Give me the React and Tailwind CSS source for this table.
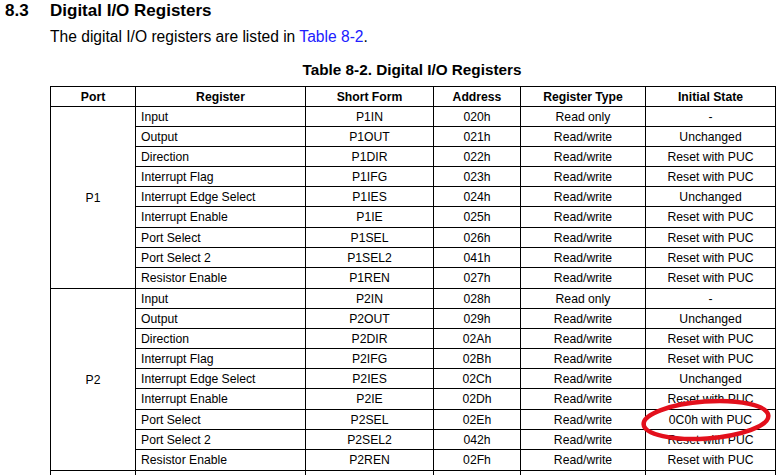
import React from "react";

const ports = [
  {
    port: "P1",
    rows: [
      ["Input", "P1IN", "020h", "Read only", "-"],
      ["Output", "P1OUT", "021h", "Read/write", "Unchanged"],
      ["Direction", "P1DIR", "022h", "Read/write", "Reset with PUC"],
      ["Interrupt Flag", "P1IFG", "023h", "Read/write", "Reset with PUC"],
      ["Interrupt Edge Select", "P1IES", "024h", "Read/write", "Unchanged"],
      ["Interrupt Enable", "P1IE", "025h", "Read/write", "Reset with PUC"],
      ["Port Select", "P1SEL", "026h", "Read/write", "Reset with PUC"],
      ["Port Select 2", "P1SEL2", "041h", "Read/write", "Reset with PUC"],
      ["Resistor Enable", "P1REN", "027h", "Read/write", "Reset with PUC"],
    ],
  },
  {
    port: "P2",
    rows: [
      ["Input", "P2IN", "028h", "Read only", "-"],
      ["Output", "P2OUT", "029h", "Read/write", "Unchanged"],
      ["Direction", "P2DIR", "02Ah", "Read/write", "Reset with PUC"],
      ["Interrupt Flag", "P2IFG", "02Bh", "Read/write", "Reset with PUC"],
      ["Interrupt Edge Select", "P2IES", "02Ch", "Read/write", "Unchanged"],
      ["Interrupt Enable", "P2IE", "02Dh", "Read/write", "Reset with PUC"],
      ["Port Select", "P2SEL", "02Eh", "Read/write", "0C0h with PUC"],
      ["Port Select 2", "P2SEL2", "042h", "Read/write", "Reset with PUC"],
      ["Resistor Enable", "P2REN", "02Fh", "Read/write", "Reset with PUC"],
    ],
  },
];

const cell = "border border-black p-0 text-center";

export default function App() {
  return (
    <div
      className="relative h-[475px] w-[784px] overflow-hidden bg-white text-black"
      style={{ fontFamily: '"Liberation Sans", Arial, sans-serif' }}
    >
      <h2 className="flex pt-[1px] text-[17px] font-bold leading-[20px]">
        <span className="w-[50px] pl-[5px]">8.3</span>
        <span>Digital I/O Registers</span>
      </h2>
      <p className="mt-[7px] pl-[50px] text-[15.6px] leading-[18px]">
        The digital I/O registers are listed in{" "}
        <span className="text-[#2020ff]">Table 8-2</span>.
      </p>
      <div className="mt-[15px] w-[774px] pl-[50px] text-center text-[15.3px] font-bold leading-[18px]">
        Table 8-2. Digital I/O Registers
      </div>
      <table className="ml-[50px] mt-[7px] w-[725px] table-fixed border-collapse text-[12.2px] leading-[14px]">
        <colgroup>
          <col className="w-[85px]" />
          <col className="w-[170px]" />
          <col className="w-[128px]" />
          <col className="w-[87px]" />
          <col className="w-[125px]" />
          <col className="w-[130px]" />
        </colgroup>
        <thead>
          <tr className="h-[20px] font-bold">
            <th className={cell}>Port</th>
            <th className={cell}>Register</th>
            <th className={cell}>Short Form</th>
            <th className={cell}>Address</th>
            <th className={cell}>Register Type</th>
            <th className={cell}>Initial State</th>
          </tr>
        </thead>
        <tbody>
          {ports.map((group, gIdx) =>
            group.rows.map((row, rIdx) => (
              <tr
                key={`${gIdx}-${rIdx}`}
                className={rIdx === 5 || rIdx === 8 ? "h-[21px]" : "h-[20px]"}
              >
                {rIdx === 0 && (
                  <td className={cell} rowSpan={group.rows.length}>
                    {group.port}
                  </td>
                )}
                <td className="border border-black py-0 pl-[5px] text-left">
                  {row[0]}
                </td>
                <td className={cell}>{row[1]}</td>
                <td className={cell}>{row[2]}</td>
                <td className={cell}>{row[3]}</td>
                <td className={cell}>{row[4]}</td>
              </tr>
            ))
          )}
          {/* next port group starts just below the visible area */}
          <tr className="h-[20px]">
            <td className={cell}></td>
            <td className={cell}></td>
            <td className={cell}></td>
            <td className={cell}></td>
            <td className={cell}></td>
            <td className={cell}></td>
          </tr>
        </tbody>
      </table>

      {/* red marker ellipse drawn over the table */}
      <svg
        className="pointer-events-none absolute left-0 top-0"
        width="784"
        height="475"
      >
        <ellipse
          cx="706"
          cy="420"
          rx="62.5"
          ry="18.5"
          fill="none"
          stroke="#e3101c"
          strokeWidth="4.5"
          transform="rotate(-4 706 420)"
        />
      </svg>
    </div>
  );
}
